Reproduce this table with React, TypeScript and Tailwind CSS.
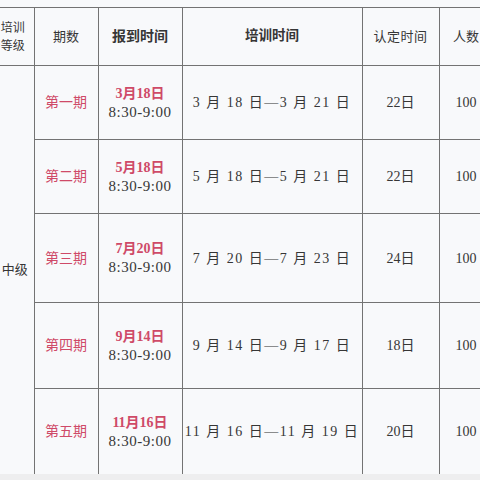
import React from 'react';

const rows = [
  { period: '第一期', date: '3月18日', range: '3 月 18 日—3 月 21 日', days: '22日', h: 'h-[74px]' },
  { period: '第二期', date: '5月18日', range: '5 月 18 日—5 月 21 日', days: '22日', h: 'h-[74px]' },
  { period: '第三期', date: '7月20日', range: '7 月 20 日—7 月 23 日', days: '24日', h: 'h-[89px]' },
  { period: '第四期', date: '9月14日', range: '9 月 14 日—9 月 17 日', days: '18日', h: 'h-[86px]' },
  { period: '第五期', date: '11月16日', range: '11 月 16 日—11 月 19 日', days: '20日', h: 'h-[86px]' },
];

const cell = 'border border-[#737373] text-center align-middle p-0';

export default function App() {
  return (
    <div
      className="w-[480px] h-[480px] overflow-hidden bg-[#eeeeef] text-[#363636]"
      style={{ fontFamily: '"Liberation Serif", "Noto Sans CJK SC", serif' }}
    >
      <div className="h-[474px] bg-[#f8f9fb] pt-[7px] overflow-hidden">
        <table className="border-collapse table-fixed ml-[-10px] w-[503px]">
          <colgroup>
            <col className="w-[44px]" />
            <col className="w-[64px]" />
            <col className="w-[84px]" />
            <col className="w-[180px]" />
            <col className="w-[77px]" />
            <col className="w-[54px]" />
          </colgroup>
          <thead>
            <tr className="h-[58px]">
              <th className={`${cell} border-l-0 font-normal text-[12px] leading-[18px] pl-[2px]`}>
                培训
                <br />
                等级
              </th>
              <th className={`${cell} font-normal text-[13px]`}>期数</th>
              <th className={`${cell} font-bold text-[14px]`}>报到时间</th>
              <th className={`${cell} font-bold text-[13.5px]`}>培训时间</th>
              <th className={`${cell} font-normal text-[13px] tracking-[0.5px]`}>认定时间</th>
              <th className={`${cell} font-normal text-[13px]`}>人数</th>
            </tr>
          </thead>
          <tbody>
            {rows.map((r, i) => (
              <tr key={r.period} className={r.h}>
                {i === 0 && (
                  <td rowSpan={5} className={`${cell} border-l-0 text-[13px] pl-[6px]`}>
                    中级
                  </td>
                )}
                <td className={`${cell} text-[14px] text-[#cf4a68]`}>{r.period}</td>
                <td className={cell}>
                  <div className="text-[14px] font-bold text-[#cf4a68] leading-[18px]">{r.date}</div>
                  <div className="text-[15px] leading-[18px] tracking-[0.5px]">8:30-9:00</div>
                </td>
                <td className={`${cell} text-[14px] tracking-[1.5px] whitespace-nowrap`}>{r.range}</td>
                <td className={`${cell} text-[14px]`}>{r.days}</td>
                <td className={`${cell} text-[14px]`}>100</td>
              </tr>
            ))}
          </tbody>
        </table>
      </div>
    </div>
  );
}
